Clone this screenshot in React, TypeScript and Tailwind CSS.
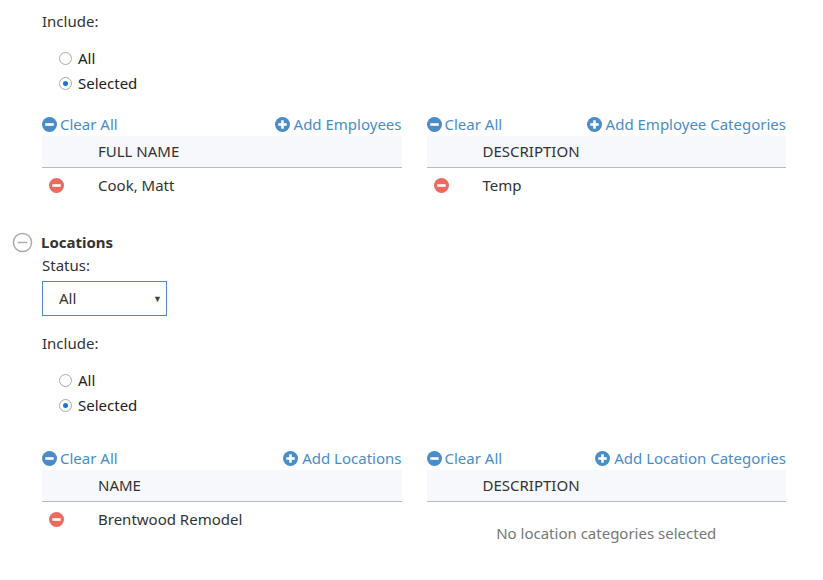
import React from "react";

const blue = "text-[#4a8cc7]";

function CircleIcon({ kind, color }: { kind: "plus" | "minus"; color: string }) {
  return (
    <svg width="15" height="15" viewBox="0 0 16 16" className="shrink-0">
      <circle cx="8" cy="8" r="8" fill={color} />
      <rect x="3.5" y="6.6" width="9" height="2.8" fill="#fff" />
      {kind === "plus" && <rect x="6.6" y="3.5" width="2.8" height="9" fill="#fff" />}
    </svg>
  );
}

function Radio({ label, checked }: { label: string; checked?: boolean }) {
  return (
    <div className="flex items-center gap-[6px] h-[25px] font-['Liberation_Sans',sans-serif] text-[15px] text-[#222]">
      <span className="w-[13px] h-[13px] rounded-full border border-[#aaa] bg-white flex items-center justify-center">
        {checked && <span className="w-[5px] h-[5px] rounded-full bg-[#1a73d9]" />}
      </span>
      {label}
    </div>
  );
}

function Table({
  add,
  col,
  rows,
  empty,
}: {
  add: string;
  col: string;
  rows: string[];
  empty?: string;
}) {
  return (
    <div className="flex-1">
      <div className={`flex justify-between items-center h-[24px] ${blue}`}>
        <span className="flex items-center gap-[3px]">
          <CircleIcon kind="minus" color="#4a8cc7" /> Clear All
        </span>
        <span className="flex items-center gap-[4px]">
          <CircleIcon kind="plus" color="#4a8cc7" /> {add}
        </span>
      </div>
      <div className="h-[32px] bg-[#f7f8fc] border-b border-[#bbb] flex items-center pl-[56px] text-[#333]">
        {col}
      </div>
      {rows.map((r) => (
        <div key={r} className="h-[34px] flex items-center text-[#333]">
          <span className="w-[56px] pl-[7px]">
            <CircleIcon kind="minus" color="#ec6b5e" />
          </span>
          {r}
        </div>
      ))}
      {empty && (
        <div className="h-[62px] flex items-center justify-center text-[#777]">{empty}</div>
      )}
    </div>
  );
}

export default function App() {
  return (
    <div className="w-[823px] h-[580px] bg-white font-['Lato',sans-serif] text-[15px] text-[#333] overflow-hidden">
      <div className="pl-[42px] pr-[37px] pt-[10px]">
        <div className="h-[22px]">Include:</div>
        <div className="pl-[17px] pt-[14px]">
          <Radio label="All" />
          <Radio label="Selected" checked />
        </div>
        <div className="flex gap-[25px] mt-[16px]">
          <Table add="Add Employees" col="FULL NAME" rows={["Cook, Matt"]} />
          <Table add="Add Employee Categories" col="DESCRIPTION" rows={["Temp"]} />
        </div>
      </div>
      <div className="mt-[28px] pl-[12px] flex items-center gap-[8px] h-[24px]">
        <svg width="21" height="21" viewBox="0 0 22 22">
          <circle cx="11" cy="11" r="9.5" fill="none" stroke="#aaa" strokeWidth="1.5" />
          <line x1="6" y1="11" x2="16" y2="11" stroke="#aaa" strokeWidth="1.5" />
        </svg>
        <span className="font-bold text-[#333]">Locations</span>
      </div>
      <div className="pl-[42px] pr-[37px]">
        <div className="h-[22px]">Status:</div>
        <div className="mt-[5px] w-[125px] h-[35px] border border-[#4a8cc7] flex items-center justify-between pl-[16px] pr-[4px]">
          <span>All</span>
          <span className="text-[9px] text-[#444]">▼</span>
        </div>
        <div className="mt-[16px] h-[22px]">Include:</div>
        <div className="pl-[17px] pt-[14px]">
          <Radio label="All" />
          <Radio label="Selected" checked />
        </div>
        <div className="flex gap-[25px] mt-[28px]">
          <Table add="Add Locations" col="NAME" rows={["Brentwood Remodel"]} />
          <Table
            add="Add Location Categories"
            col="DESCRIPTION"
            rows={[]}
            empty="No location categories selected"
          />
        </div>
      </div>
    </div>
  );
}
